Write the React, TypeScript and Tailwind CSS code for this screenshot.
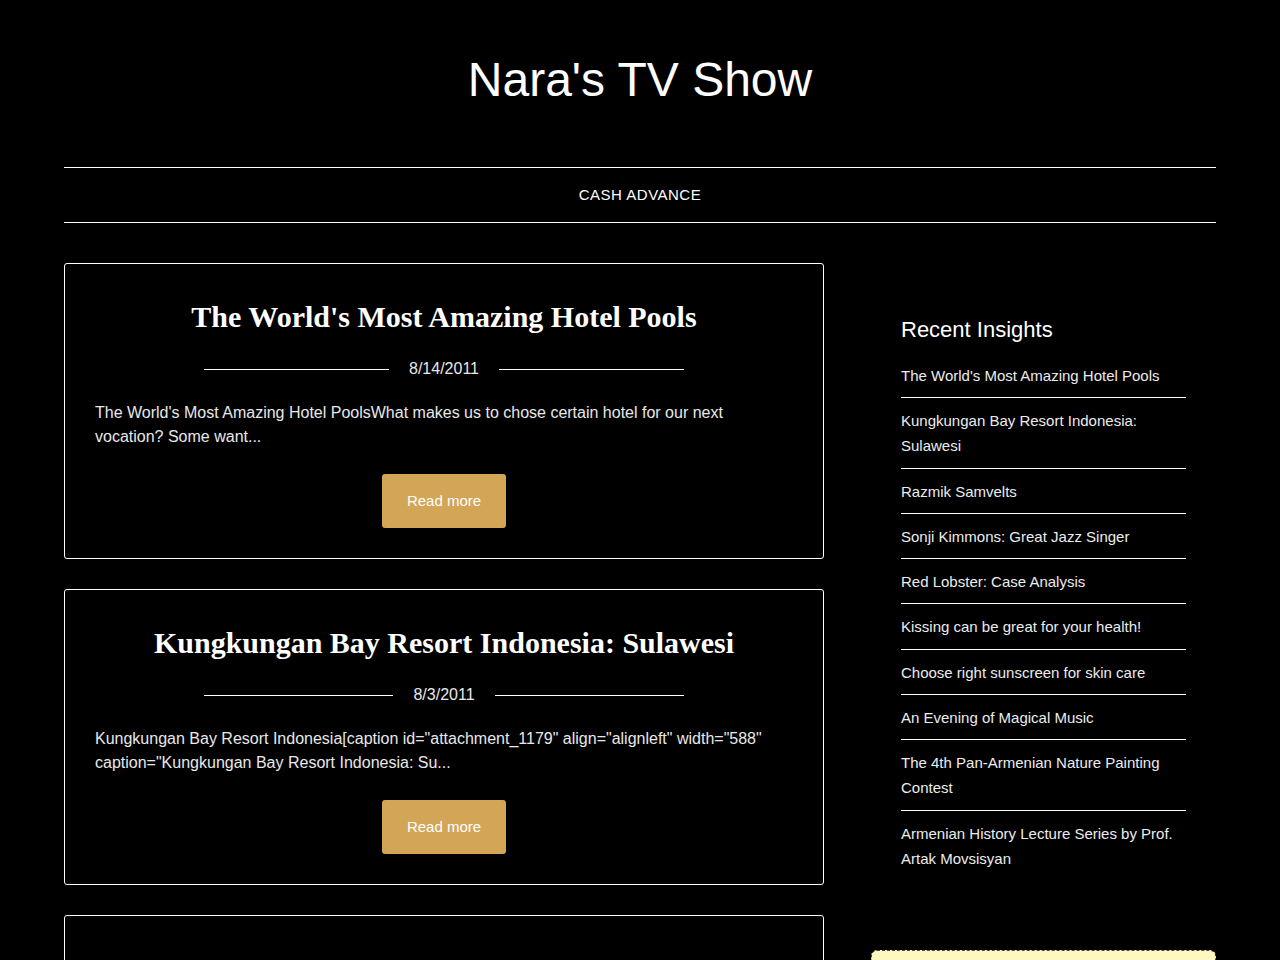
const posts = [
  {
    title: "The World's Most Amazing Hotel Pools",
    date: '8/14/2011',
    excerpt:
      "The World's Most Amazing Hotel PoolsWhat makes us to chose certain hotel for our next vocation? Some want...",
  },
  {
    title: 'Kungkungan Bay Resort Indonesia: Sulawesi',
    date: '8/3/2011',
    excerpt:
      'Kungkungan Bay Resort Indonesia[caption id="attachment_1179" align="alignleft" width="588" caption="Kungkungan Bay Resort Indonesia: Su...',
  },
  {
    title: 'Razmik Samvelts',
    date: '7/21/2011',
    excerpt: 'Razmik Samvelts...',
  },
];

const recent = [
  "The World's Most Amazing Hotel Pools",
  'Kungkungan Bay Resort Indonesia: Sulawesi',
  'Razmik Samvelts',
  'Sonji Kimmons: Great Jazz Singer',
  'Red Lobster: Case Analysis',
  'Kissing can be great for your health!',
  'Choose right sunscreen for skin care',
  'An Evening of Magical Music',
  'The 4th Pan-Armenian Nature Painting Contest',
  'Armenian History Lecture Series by Prof. Artak Movsisyan',
];

function PostCard({ post, first }: { post: (typeof posts)[number]; first: boolean }) {
  return (
    <article
      className={
        first
          ? 'border border-white rounded-[3px] px-[30px] pt-[30px] pb-[30px] flex flex-col items-center'
          : 'border border-white rounded-[3px] px-[30px] pt-[60px] pb-[30px] flex flex-col items-center'
      }
    >
      <h2 className="font-['Liberation_Serif',serif] font-bold text-[30px] leading-[45px] text-white text-center">
        {post.title}
      </h2>
      <div className="mt-[18px] flex items-center w-[480px]">
        <span className="flex-1 h-px bg-white" />
        <span className="px-5 text-base leading-6 text-[#e8e8e8]">{post.date}</span>
        <span className="flex-1 h-px bg-white" />
      </div>
      <p className="mt-5 self-stretch text-base leading-6 text-[#e8e8e8]">{post.excerpt}</p>
      <a
        href="#"
        className="mt-[25px] h-[54px] flex items-center bg-[#d3a556] text-white text-[15px] px-[25px] rounded-[3px]"
      >
        Read more
      </a>
    </article>
  );
}

export default function App() {
  return (
    <div className="min-h-screen bg-black font-['Liberation_Sans',Arial,sans-serif] text-white">
      <div className="mx-16">
        <header className="pt-[51px] text-center">
          <h1 className="text-[48px] leading-[58px] text-white">Nara's TV Show</h1>
        </header>

        <nav className="mt-[58px] border-y border-white h-14 flex items-center justify-center">
          <a href="#" className="text-[15px] tracking-[0.5px] uppercase text-white">
            Cash Advance
          </a>
        </nav>

        <div className="mt-10 flex justify-between items-start">
          <main className="w-[760px] flex flex-col gap-[30px]">
            {posts.map((p, i) => (
              <PostCard key={p.title} post={p} first={i < 2} />
            ))}
          </main>

          <aside className="w-[345px]">
            <div className="px-[30px] pt-[54px]">
              <h3 className="text-[22px] leading-[26px] text-white">Recent Insights</h3>
              <ul className="mt-[10px]">
                {recent.map((r, i) => (
                  <li
                    key={r}
                    className={
                      i < recent.length - 1
                        ? 'pt-[10px] pb-[9.3px] border-b border-white text-[15px] leading-[25px] text-[#ececec]'
                        : 'pt-[10px] pb-[9.3px] text-[15px] leading-[25px] text-[#ececec]'
                    }
                  >
                    <a href="#">{r}</a>
                  </li>
                ))}
              </ul>
            </div>
            <div className="mt-[70px] h-40 rounded-md border border-dashed border-[#444] bg-[#fff6c0]" />
          </aside>
        </div>
      </div>
    </div>
  );
}
